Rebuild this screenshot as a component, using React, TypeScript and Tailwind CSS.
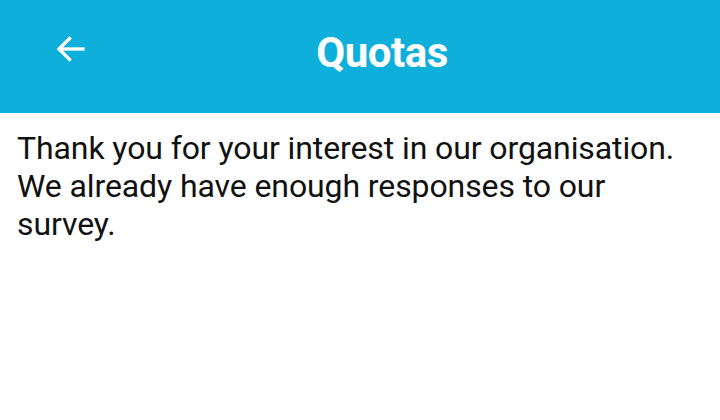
import React from 'react'

export default function App() {
  return (
    <div className="w-[720px] h-[420px] bg-white font-['Roboto',sans-serif]">
      <header className="relative h-[113px] bg-[#0eb0db] flex items-center justify-center">
        <button className="absolute left-[51px] top-[29px] w-[40px] h-[40px] flex items-center justify-center text-white">
          <svg width="36" height="36" viewBox="0 0 24 24" fill="none" stroke="currentColor" strokeWidth="2.2" strokeLinecap="square">
            <path d="M20 12H5" />
            <path d="M11 5l-7 7 7 7" />
          </svg>
        </button>
        <h1 className="text-white text-[42px] font-bold tracking-[-0.5px] mb-[8px] ml-[44px]">Quotas</h1>
      </header>
      <div className="px-[17px] pt-[16px] text-[32px] tracking-[-0.1px] leading-[38px] text-[#111]">
        Thank you for your interest in our organisation. We already have enough responses to our survey.
      </div>
    </div>
  )
}
